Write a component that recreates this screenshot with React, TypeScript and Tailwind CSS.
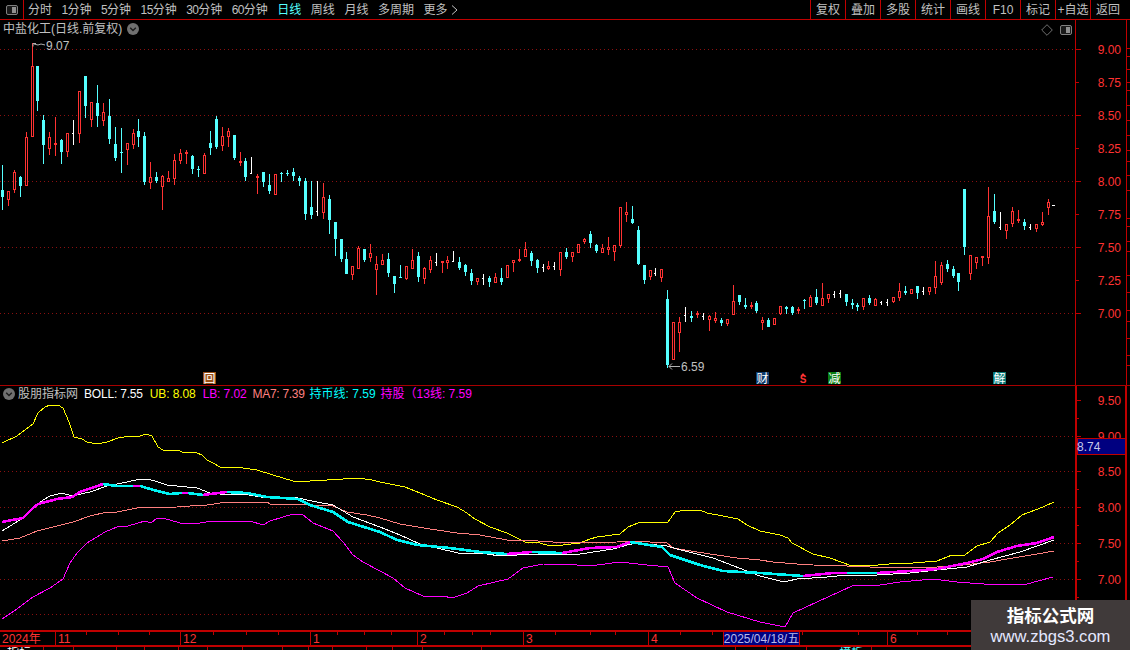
const RED = "#ff3232";
const LINE = "#c00000";
const DOT = "#8a1010";

// [colour, wick top, body top, body bottom, wick bottom] in page pixels
const CANDLES: [string, number, number, number, number][] = [
  ["c",165,190,197,210],["r",191,191,200,206],["r",170,172,190,193],["c",176,177,186,197],["r",132,137,186,186],
  ["r",43,66,137,137],["c",66,66,101,111],["c",115,120,145,164],["r",132,137,149,155],["r",117,143,145,156],
  ["c",139,140,152,164],["r",133,133,152,157],["w",120,133,134,145],["r",91,91,134,143],["c",76,76,106,118],
  ["r",102,102,120,127],["c",85,103,116,127],["r",103,112,121,126],["c",99,116,139,144],["c",127,144,158,161],
  ["c",128,152,153,173],["r",143,143,150,165],["r",129,133,145,149],["c",119,131,137,147],["c",132,136,182,185],
  ["r",162,177,183,189],["c",172,177,181,183],["r",175,176,187,210],["r",171,178,182,182],["r",154,160,179,185],
  ["r",149,153,161,164],["r",150,152,154,164],["c",155,156,169,174],["c",166,169,170,177],["r",153,155,174,174],
  ["c",131,143,148,155],["c",116,119,147,149],["r",127,136,146,151],["r",128,131,137,147],["c",135,135,158,160],
  ["r",152,161,163,166],["c",158,161,177,181],["w",157,173,174,174],["r",174,176,178,194],["c",172,172,182,187],
  ["c",174,185,191,194],["r",174,174,195,195],["c",172,173,174,182],["c",170,173,174,176],["c",168,172,176,181],
  ["c",176,178,181,186],["c",178,181,214,220],["c",181,207,215,219],["w",181,211,212,216],["r",183,197,213,219],
  ["c",195,199,220,234],["c",222,222,239,256],["c",239,239,259,262],["c",252,259,274,274],["r",266,266,275,280],
  ["r",246,248,269,269],["c",249,249,260,262],["r",244,253,258,262],["r",256,264,270,295],["r",254,260,265,265],
  ["c",253,259,273,277],["c",276,276,284,293],["c",265,277,278,278],["r",266,266,279,280],["r",249,260,269,269],
  ["c",252,256,277,282],["r",267,268,279,284],["r",256,260,270,273],["w",253,262,263,266],["r",261,261,263,273],
  ["r",256,260,263,269],["w",251,261,262,262],["c",257,262,268,270],["c",264,265,272,276],["c",269,273,281,285],
  ["r",278,278,282,285],["w",274,278,279,285],["c",276,278,282,287],["r",273,277,283,283],["c",268,278,282,285],
  ["r",265,265,278,278],["r",260,260,263,272],["r",249,259,261,262],["r",242,249,257,257],["c",251,253,261,266],
  ["c",259,260,268,273],["w",264,267,268,272],["r",261,266,269,270],["w",262,266,267,270],["r",252,252,270,276],
  ["c",248,252,257,259],["r",252,252,257,262],["r",244,244,253,253],["r",238,239,242,244],["c",231,234,243,248],
  ["c",244,245,251,253],["r",244,248,253,253],["r",237,247,250,255],["r",245,245,252,261],["r",207,207,246,248],
  ["r",202,212,215,222],["c",206,219,223,224],["c",226,230,264,265],["c",265,265,280,284],["r",270,270,277,280],
  ["w",268,273,274,276],["r",269,269,278,282],["c",290,299,365,368],["r",322,322,360,360],["r",317,322,333,352],
  ["w",307,315,316,322],["c",311,316,318,322],["r",311,313,315,318],["w",313,316,317,320],["r",315,316,320,331],
  ["r",312,318,321,323],["c",318,320,323,326],["r",319,319,324,326],["r",285,301,315,315],["c",295,295,302,305],
  ["c",298,305,307,309],["r",302,305,307,309],["c",301,303,311,313],["r",317,320,323,330],["c",318,320,327,327],
  ["r",318,318,325,325],["r",306,306,314,315],["c",306,307,309,314],["c",306,307,313,315],["r",307,309,311,314],
  ["c",299,300,301,309],["r",295,297,307,307],["c",289,297,303,305],["r",283,298,306,306],["r",294,294,299,303],
  ["w",291,294,295,298],["w",290,293,294,298],["c",294,294,302,306],["c",299,303,305,309],["c",303,305,307,311],
  ["r",298,298,307,310],["c",295,298,303,305],["r",298,299,306,306],["w",301,302,303,305],["w",299,302,303,306],
  ["r",297,297,302,303],["r",283,291,298,301],["c",286,291,293,295],["r",289,289,294,294],["c",286,286,293,299],
  ["w",287,291,292,295],["r",287,287,292,295],["r",261,276,288,294],["r",262,265,283,285],["c",260,264,269,272],
  ["c",266,269,276,278],["c",273,273,282,291],["c",189,189,247,255],["r",255,255,274,280],["r",257,257,263,269],
  ["r",256,256,258,266],["r",187,216,258,264],["c",194,211,222,224],["w",212,227,228,230],["r",224,224,231,239],
  ["r",207,211,224,227],["r",210,219,221,223],["c",219,222,226,230],["w",224,227,228,230],["r",224,224,229,232],
  ["r",212,222,225,226],["r",199,202,208,215],
];

const pts = (a: number[]) => {
  let s = "";
  for (let i = 0; i < a.length; i += 2) s += `${a[i]},${a[i + 1]} `;
  return s;
};

const UB = [2,443,17,436,33,424,38,413,45,407,50,405,58,405,63,408,69,422,74,437,82,439,87,442,97,444,107,442,118,438,130,436,140,436,146,434,152,436,158,447,163,450,178,450,182,452,197,453,202,455,207,460,213,463,220,467,227,468,233,467,243,468,257,470,273,475,293,481,305,482,315,480,327,480,343,479,358,478,372,480,380,482,390,484,405,487,420,493,437,500,457,507,467,513,475,519,490,527,507,533,517,538,525,542,540,543,550,546,563,545,580,543,590,539,597,537,620,534,628,527,638,523,668,522,675,512,685,510,700,510,707,513,723,516,738,519,747,525,760,531,780,535,788,538,792,543,813,554,830,558,852,566,878,565,900,563,913,563,937,561,952,555,965,555,977,546,990,542,998,533,1010,525,1022,515,1043,507,1054,502];
const MA7 = [2,541,20,538,37,531,53,527,73,522,90,516,107,512,117,512,137,508,177,507,190,506,207,505,227,502,267,502,270,504,300,504,310,505,333,506,347,512,367,515,380,518,400,524,430,529,457,533,480,535,507,540,523,540,553,542,580,543,617,542,633,541,667,543,673,548,697,552,737,558,760,560,773,562,797,564,813,565,847,566,870,567,937,567,963,565,990,562,1013,558,1037,554,1054,551];
const BOLL = [2,531,15,523,23,518,33,508,43,500,50,496,62,493,72,496,90,492,107,486,127,482,140,479,148,479,158,482,167,485,197,488,210,493,220,494,243,494,267,498,293,497,317,502,333,505,353,517,380,527,400,535,420,544,437,548,458,553,487,554,500,556,517,555,528,554,580,554,613,549,627,545,637,543,667,546,677,549,713,558,747,571,760,576,780,581,788,581,797,579,827,577,847,575,877,575,910,573,937,570,967,567,990,560,1020,552,1054,540];
const LB = [2,619,17,609,33,597,50,588,63,579,70,563,77,553,87,543,105,532,117,527,128,526,145,521,151,523,157,518,163,518,180,523,200,523,213,521,250,521,263,525,270,521,293,514,302,514,313,523,333,531,343,542,353,555,363,562,380,571,393,578,405,588,423,596,443,596,452,598,467,593,478,586,508,579,523,568,543,564,577,565,590,566,620,562,647,565,668,567,675,583,697,598,727,612,760,622,785,627,793,613,817,602,852,586,880,585,900,582,933,579,957,582,997,585,1027,584,1053,577];

// thick line changes colour along the way
const HOLD: [string, number[]][] = [
  ["#ff00ff", [2,522,23,518,33,508,38,504,57,499,72,497,80,492,103,484]],
  ["#00f4f4", [103,484,117,486,133,486]],
  ["#ff00ff", [133,486,140,486]],
  ["#00f4f4", [140,486,157,491,170,494,182,493]],
  ["#ff00ff", [182,493,188,493]],
  ["#00f4f4", [188,493,203,495]],
  ["#ff00ff", [203,495,227,492]],
  ["#00f4f4", [227,492,247,493,267,497,298,499,310,505,333,512,348,522,380,532,397,540,418,545,450,548,480,552,507,554]],
  ["#ff00ff", [507,554,532,552]],
  ["#00f4f4", [532,552,562,553]],
  ["#ff00ff", [562,553,590,548,617,547,630,542]],
  ["#00f4f4", [630,542,662,547,670,555,700,565,723,571,760,573,803,576]],
  ["#ff00ff", [803,576,833,573,847,573]],
  ["#00f4f4", [847,573,877,573]],
  ["#ff00ff", [877,573,910,571,937,569,967,563,983,559,997,552,1017,546,1037,543,1054,537]],
];

const TOOLS_LEFT = ["分时", "1分钟", "5分钟", "15分钟", "30分钟", "60分钟", "日线", "周线", "月线", "多周期", "更多"];
const TOOLS_RIGHT = ["复权", "叠加", "多股", "统计", "画线", "F10", "标记", "+自选", "返回"];
const TOP_PRICES: [string, number][] = [["9.00",49],["8.75",82],["8.50",115],["8.25",148],["8.00",181],["7.75",214],["7.50",247],["7.25",280],["7.00",313]];
const LOW_PRICES: [string, number][] = [["9.50",400],["9.00",436],["8.50",471],["8.00",507],["7.50",543],["7.00",579]];
const SIDE_TICKS = [28,36,49,62,70,85,100,115,130,141,155,170,198,206,221,231,255,272,290,301,318,335,345,366,388,400,418,438,458,478,498,520,560,590,612];
const DATE_CELLS = [["2024年",55],["11",125],["12",130],["1",107],["2",106],["3",125],["4",75]] as const;
const DATE_TICKS = [86,118,149,213,246,278,337,364,391,444,472,490,555,590,615,680,712,802,858,917,947];
const TAB_WIDTHS = [44,30,43,28,34,29,35,40,26,24,34,26,30,59,255,31,40,65,258];

function PanelIcon({ className }: { className: string }) {
  return (
    <svg viewBox="0 0 12 10" className={className}>
      <rect x="0.5" y="0.5" width="11" height="9" rx="1.5" fill="#1a1a1a" stroke="#808080" />
      <rect x="6" y="2" width="4" height="6" fill="#909090" />
    </svg>
  );
}

function ChevronDot({ className }: { className: string }) {
  return (
    <svg viewBox="0 0 12 12" className={className}>
      <circle cx="6" cy="6" r="6" fill="#707070" />
      <path d="M3.2 4.8 6 7.6 8.8 4.8" fill="none" stroke="#1c1c1c" strokeWidth="1.4" />
    </svg>
  );
}

function Candles() {
  return (
    <g shapeRendering="crispEdges">
      {CANDLES.map(([c, wt, bt, bb, wb], k) => {
        const x = Math.floor(2.33 + 5.942 * k);
        if (c === "w") {
          return (
            <g key={k} fill="#ffffff">
              <rect x={x} y={wt} width={1} height={wb - wt} />
              <rect x={x - 1} y={bt} width={1} height={1} />
            </g>
          );
        }
        if (c === "c") {
          return (
            <g key={k} fill="#55ffff">
              <rect x={x} y={wt} width={1} height={wb - wt} />
              <rect x={x - 1} y={bt} width={3} height={Math.max(bb - bt, 1)} />
            </g>
          );
        }
        return (
          <g key={k}>
            <rect x={x} y={wt} width={1} height={wb - wt} fill={RED} />
            <rect x={x - 1} y={bt} width={3} height={bb - bt} fill={RED} />
            {bb - bt > 2 && <rect x={x} y={bt + 1} width={1} height={bb - bt - 2} fill="#000000" />}
          </g>
        );
      })}
      <rect x={1052} y={205} width={3} height={1} fill="#ffffff" />
    </g>
  );
}

function Badge({ x, label, bg }: { x: number; label: string; bg: string }) {
  return (
    <g>
      <rect x={x} y={372} width={13} height={12} fill={bg} shapeRendering="crispEdges" />
      <text x={x + 6.5} y={382.5} textAnchor="middle" fontSize="12" fill="#ffffff">{label}</text>
    </g>
  );
}

function TopChart() {
  return (
    <svg viewBox="0 20 1075 365" className="h-[365px] w-[1075px] font-['Liberation_Sans','Noto_Sans_CJK_SC',sans-serif]">
      {[49, 115, 181, 247, 313].map((y) => (
        <line key={y} x1={0} x2={1075} y1={y + 0.5} y2={y + 0.5} stroke={DOT} strokeDasharray="1 3" shapeRendering="crispEdges" />
      ))}
      <Candles />
      <path d="M33 43.5h3M33 43.5v3M34 44l4 1 3-1 4 1" fill="none" stroke="#b0b0b0" />
      <text x={46} y={50} fontSize="12" fill="#c0c0c0">9.07</text>
      <path d="M669 366.5h11M669 366.5l3-3M669 366.5l3 3" fill="none" stroke="#b0b0b0" />
      <text x={681} y={371} fontSize="12" fill="#c0c0c0">6.59</text>
      <Badge x={203} label="回" bg="#9a4f17" />
      <Badge x={756} label="财" bg="#0f3c6e" />
      <path d="M803 373l2.5 3h-5z" fill={RED} />
      <text x={803} y={383} textAnchor="middle" fontSize="10" fontWeight="700" fill={RED}>S</text>
      <Badge x={828} label="减" bg="#0a7d12" />
      <Badge x={993} label="解" bg="#0a7a78" />
    </svg>
  );
}

function BottomChart() {
  return (
    <svg viewBox="0 386 1075 244" className="h-[244px] w-[1075px]">
      {[436, 471, 507, 543, 579, 614].map((y) => (
        <line key={y} x1={0} x2={1075} y1={y + 0.5} y2={y + 0.5} stroke={DOT} strokeDasharray="1 3" shapeRendering="crispEdges" />
      ))}
      <g fill="none" shapeRendering="crispEdges">
        <polyline points={pts(UB)} stroke="#ffff00" />
        <polyline points={pts(LB)} stroke="#ff00ff" />
        <polyline points={pts(MA7)} stroke="#ff8080" />
        <polyline points={pts(BOLL)} stroke="#ffffff" />
        {HOLD.map(([c, p], i) => (
          <polyline key={i} points={pts(p)} stroke={c} strokeWidth="2.6" />
        ))}
      </g>
    </svg>
  );
}

function TopAxis() {
  return (
    <svg viewBox="1076 20 54 365" className="h-[365px] w-[54px] font-['Liberation_Sans',sans-serif]">
      <line x1={1126.5} x2={1126.5} y1={20} y2={385} stroke={LINE} shapeRendering="crispEdges" />
      {SIDE_TICKS.map((y) => (
        <line key={y} x1={1127} x2={1130} y1={y + 20.5} y2={y + 20.5} stroke={LINE} shapeRendering="crispEdges" />
      ))}
      {TOP_PRICES.map(([t, y], i) => (
        <g key={t}>
          <line x1={1076} x2={i % 2 ? 1079 : 1081} y1={y + 0.5} y2={y + 0.5} stroke={LINE} shapeRendering="crispEdges" />
          <text x={1121} y={y + 4.5} textAnchor="end" fontSize="12" fill={RED}>{t}</text>
        </g>
      ))}
    </svg>
  );
}

function LowAxis() {
  return (
    <svg viewBox="1077 386 53 244" className="h-[244px] w-[53px] font-['Liberation_Sans',sans-serif]">
      <line x1={1126} x2={1126} y1={386} y2={630} stroke={LINE} strokeWidth="2" shapeRendering="crispEdges" />
      {[418, 489, 525, 561, 597].map((y) => (
        <line key={y} x1={1077} x2={1079} y1={y + 0.5} y2={y + 0.5} stroke={LINE} shapeRendering="crispEdges" />
      ))}
      {LOW_PRICES.map(([t, y]) => (
        <g key={t}>
          <line x1={1077} x2={1081} y1={y + 0.5} y2={y + 0.5} stroke={LINE} shapeRendering="crispEdges" />
          <text x={1121} y={y + 4.5} textAnchor="end" fontSize="12" fill={RED}>{t}</text>
        </g>
      ))}
      <rect x={1077} y={438.5} width={48} height={16} fill="#000080" stroke={LINE} shapeRendering="crispEdges" />
      <text x={1077} y={450.5} fontSize="12" fill="#c8c8e8">8.74</text>
    </svg>
  );
}

// the digits of the period labels sit a bit tighter than the default font
function ToolLabel({ text }: { text: string }) {
  const digits = text.match(/^\d+/)?.[0] ?? "";
  return (
    <span className={text === "日线" ? "text-[#55ffff]" : ""}>
      <span className="tracking-[-0.65px]">{digits}</span>
      {text.slice(digits.length)}
    </span>
  );
}

export default function App() {
  return (
    <div className="relative flex h-[650px] w-[1130px] flex-col overflow-hidden bg-black font-['Liberation_Sans','Noto_Sans_CJK_SC',sans-serif] text-[12px] leading-none text-[#c0c0c0]">
      {/* toolbar */}
      <div className="flex h-[20px] shrink-0 items-center border-b border-[#c00000]">
        <div className="flex h-full w-[24px] items-center justify-center border-r border-[#c00000]">
          <PanelIcon className="h-[10px] w-[12px]" />
        </div>
        <div className="ml-[4px] flex items-center gap-[9.5px]">
          {TOOLS_LEFT.map((t) => (
            <ToolLabel key={t} text={t} />
          ))}
          <svg viewBox="0 0 7 10" className="-ml-[6px] h-[10px] w-[7px]">
            <path d="M1 .5 6 5 1 9.5" fill="none" stroke="#c0c0c0" />
          </svg>
        </div>
        <div className="ml-auto flex h-full pr-[5px]">
          {TOOLS_RIGHT.map((t) => (
            <div key={t} className="flex h-full w-[35px] items-center justify-center border-l border-[#c00000] whitespace-nowrap">{t}</div>
          ))}
        </div>
      </div>

      {/* price panel */}
      <div className="flex h-[366px] shrink-0 border-b border-[#a80000]">
        <div className="relative h-[365px] w-[1075px]">
          <TopChart />
          <div className="absolute left-[3px] top-[3px] flex items-center">
            <span>中盐化工(日线.前复权)</span>
            <ChevronDot className="ml-[5px] h-[12px] w-[12px]" />
          </div>
          <div className="absolute right-[3px] top-[4px] flex items-center gap-[7px]">
            <svg viewBox="0 0 12 12" className="h-[12px] w-[12px]">
              <path d="M6 .7 11.3 6 6 11.3 .7 6z" fill="none" stroke="#707070" />
            </svg>
            <PanelIcon className="h-[10px] w-[12px]" />
          </div>
        </div>
        <div className="border-l border-[#c00000]">
          <TopAxis />
        </div>
      </div>

      {/* indicator panel */}
      <div className="flex h-[244px] shrink-0">
        <div className="relative h-[244px] w-[1075px]">
          <BottomChart />
          <div className="absolute left-[3px] top-[2px] flex items-center whitespace-nowrap">
            <ChevronDot className="mr-[3px] h-[12px] w-[12px]" />
            <span className="mr-[6px]">股朋指标网</span>
            <span className="mr-[7px] tracking-[-0.2px] text-white">BOLL: 7.55</span>
            <span className="mr-[7px] tracking-[-0.1px] text-[#ffff00]">UB: 8.08</span>
            <span className="mr-[6px] tracking-[-0.1px] text-[#ff00ff]">LB: 7.02</span>
            <span className="mr-[5px] tracking-[-0.3px] text-[#ff8080]">MA7: 7.39</span>
            <span className="mr-[5px] text-[#00ffff]">持币线: 7.59</span>
            <span className="text-[#ff00ff]">持股（13线: 7.59</span>
          </div>
        </div>
        <div className="border-l-2 border-[#c00000]">
          <LowAxis />
        </div>
      </div>

      {/* date axis */}
      <div className="relative flex h-[17px] shrink-0 items-center border-y-2 border-[#c00000] text-[#ff3232]">
        {DATE_CELLS.map(([t, w], i) => (
          <div
            key={t}
            className={`flex h-full items-center pl-[2px] ${i ? "border-l border-[#c00000]" : ""}`}
            style={{ width: w }}
          >
            {t}
          </div>
        ))}
        <div className="flex h-full w-[77px] items-center justify-center border-x border-[#c00000] bg-[#000080] text-[#b8b8e8] whitespace-nowrap">
          2025/04/18/五
        </div>
        <div className="ml-[87px] flex h-full items-center border-l border-[#c00000] pl-[2px]">6</div>
        <svg viewBox="0 0 1130 3" className="absolute left-0 top-0 h-[3px] w-[1130px]">
          {DATE_TICKS.map((x) => (
            <rect key={x} x={x} y={0} width={1} height={3} fill={LINE} shapeRendering="crispEdges" />
          ))}
        </svg>
      </div>

      {/* sheet tabs, only their top edge is in the window */}
      <div className="flex h-[3px] shrink-0 overflow-hidden">
        {TAB_WIDTHS.map((w, i) => (
          <div key={i} className="h-full border-r border-[#c00000] pl-[7px] whitespace-nowrap" style={{ width: w }}>
            {i === 0 && <span className="text-white">指标</span>}
            {i === 17 && <span className="ml-[25px] text-[#55ffff]">模板</span>}
          </div>
        ))}
      </div>

      {/* watermark */}
      <div className="absolute bottom-0 right-0 flex h-[50px] w-[159px] flex-col items-center bg-[#403a3a] pt-[6px]">
        <span className="text-[17.5px] font-bold leading-[20px] text-white">指标公式网</span>
        <span className="mt-[1px] text-[16.6px] leading-[20px] text-[#e4e8ff]">www.zbgs3.com</span>
      </div>
    </div>
  );
}
